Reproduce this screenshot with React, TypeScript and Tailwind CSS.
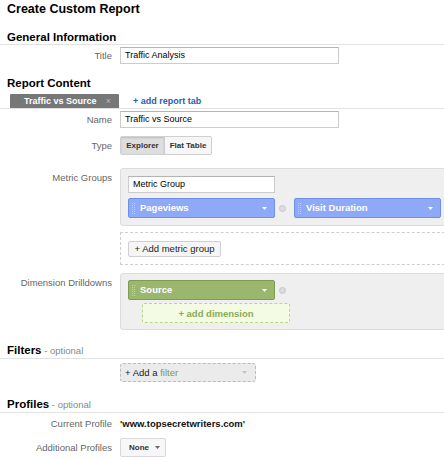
import React from 'react';

function Heading({ title, optional, className = '' }: { title: string; optional?: boolean; className?: string }) {
  return (
    <h2 className={`px-[7px] text-[11.5px] leading-[14px] font-bold text-black border-b border-[#e2e2e2] ${className}`}>
      {title}
      {optional && <span className="font-normal text-[9.5px] text-[#888]"> - optional</span>}
    </h2>
  );
}

function Row({ label, top, children, className = '' }: { label: string; top?: boolean; children: React.ReactNode; className?: string }) {
  return (
    <div className={`flex ${top ? 'items-start' : 'items-center'} ${className}`}>
      <div className={`w-[112px] shrink-0 text-right text-[9.5px] leading-[13px] text-[#666] ${top ? 'pt-[3px]' : ''}`}>{label}</div>
      <div className="ml-[8px] flex-1 min-w-0 leading-[13px]">{children}</div>
    </div>
  );
}

function TextInput({ value, width }: { value: string; width: string }) {
  return (
    <div className={`${width} h-[17px] border border-[#ccc] border-t-[#b4b4b4] bg-white pl-[4px] text-[9px] leading-[15px] text-black whitespace-nowrap`}>
      {value}
    </div>
  );
}

function Handle({ color }: { color: string }) {
  return (
    <svg width="4" height="11" viewBox="0 0 4 11" className="shrink-0">
      {[0, 2, 4, 6, 8, 10].map((y) => (
        <g key={y} fill={color}>
          <rect x="0" y={y} width="1" height="1" />
          <rect x="2" y={y} width="1" height="1" />
        </g>
      ))}
    </svg>
  );
}

function Caret({ color = '#fff' }: { color?: string }) {
  return (
    <svg width="5" height="3" viewBox="0 0 5 3" className="shrink-0">
      <path d="M0 0 H5 L2.5 3 Z" fill={color} />
    </svg>
  );
}

function Remove({ gap }: { gap: string }) {
  return <span className={`ml-[4px] ${gap} block w-[7px] h-[7px] shrink-0 rounded-full border border-[#c8c8c8] bg-[#dcdcdc]`} />;
}

function Pill({ label, tone }: { label: string; tone: 'blue' | 'green' }) {
  const cls =
    tone === 'blue'
      ? 'bg-[#8eaaf7] border-[#6f8fe6]'
      : 'bg-[#9bb66d] border-[#7f9c52]';
  const dot = tone === 'blue' ? '#bccbf5' : '#c3d4a2';
  return (
    <div className={`w-[147px] h-[20px] shrink-0 flex items-center rounded-[2px] border ${cls} pl-[3px] pr-[7px]`}>
      <Handle color={dot} />
      <span className="ml-[4px] flex-1 text-[9.5px] font-bold text-white leading-[12px] whitespace-nowrap">{label}</span>
      <Caret />
    </div>
  );
}

export default function App() {
  return (
    <div className="w-[444px] h-[460px] overflow-hidden bg-white text-black text-[9.5px] leading-[13px] font-['Liberation_Sans',Arial,sans-serif]">
      <h1 className="pl-[7px] text-[12.5px] leading-[18px] font-bold">Create Custom Report</h1>

      <Heading title="General Information" className="mt-[12px]" />
      <Row label="Title" className="mt-[2px]">
        <TextInput value="Traffic Analysis" width="w-[219px]" />
      </Row>

      <Heading title="Report Content" className="mt-[12px] border-b-0" />
      <div className="mt-[4px] flex items-end border-b border-[#e2e2e2]">
        <div className="ml-[10px] w-[109px] h-[14px] bg-[#777] flex items-center pl-[14px] pr-[8px] rounded-t-[1px]">
          <span className="flex-1 text-[9px] leading-[12px] font-bold text-white whitespace-nowrap">Traffic vs Source</span>
          <span className="text-[9px] leading-[10px] text-[#bbb]">×</span>
        </div>
        <span className="ml-[14px] mb-[1px] text-[9px] leading-[12px] font-bold text-[#2a5cb0] whitespace-nowrap">+ add report tab</span>
      </div>

      <Row label="Name" className="mt-[2px]">
        <TextInput value="Traffic vs Source" width="w-[219px]" />
      </Row>

      <Row label="Type" className="mt-[8px]">
        <div className="flex h-[19px] w-[92px] rounded-[2px] border border-[#d0d0d0] bg-[#f6f6f6] text-[8px] font-bold text-[#333] overflow-hidden">
          <span className="w-[44px] flex items-center justify-center bg-[#dedede] shadow-[inset_0_1px_2px_rgba(0,0,0,0.15)] border-r border-[#ccc]">Explorer</span>
          <span className="flex-1 flex items-center justify-center">Flat Table</span>
        </div>
      </Row>

      <Row label="Metric Groups" top className="mt-[13px]">
        <div className="w-[330px] rounded-l-[3px] border border-[#dcdcdc] bg-[#efefef] pl-[7px] pt-[7px] pb-[7px]">
          <TextInput value="Metric Group" width="w-[147px]" />
          <div className="mt-[5px] flex items-center">
            <Pill label="Pageviews" tone="blue" />
            <Remove gap="mr-[8px]" />
            <Pill label="Visit Duration" tone="blue" />
          </div>
        </div>
        <div className="mt-[6px] w-[330px] h-[33px] border border-dashed border-[#cfcfcf] border-r-0 flex items-center pl-[7px]">
          <span className="h-[16px] w-[93px] flex items-center justify-center rounded-[2px] border border-[#cfcfcf] bg-[#f5f5f5] text-[9.5px] text-[#222] whitespace-nowrap">
            + Add metric group
          </span>
        </div>
      </Row>

      <Row label="Dimension Drilldowns" top className="mt-[8px]">
        <div className="w-[330px] h-[57px] rounded-l-[3px] border border-[#dcdcdc] bg-[#efefef] pl-[7px] pt-[6px]">
          <div className="flex items-center">
            <Pill label="Source" tone="green" />
            <Remove gap="" />
          </div>
          <div className="mt-[3px] ml-[14px] w-[148px] h-[20px] rounded-[2px] border border-dashed border-[#bdd58a] bg-[#f4fbe4] flex items-center justify-center text-[9.5px] font-bold text-[#8aab55]">
            + add dimension
          </div>
        </div>
      </Row>

      <Heading title="Filters" optional className="mt-[13px]" />
      <Row label="" className="mt-[4px]">
        <div className="w-[136px] h-[19px] rounded-[3px] border border-dashed border-[#bcbcbc] bg-[#ebebeb] flex items-center pl-[4px] pr-[8px]">
          <span className="flex-1 text-[9.5px] text-[#222]">
            + Add a <span className="text-[#7c9a4a]">filter</span>
          </span>
          <Caret color="#c4c4c4" />
        </div>
      </Row>

      <Heading title="Profiles" optional className="mt-[15px]" />
      <Row label="Current Profile" className="mt-[4px]">
        <div className="text-[9.5px] leading-[13px] font-bold text-[#111] whitespace-nowrap">'www.topsecretwriters.com'</div>
      </Row>
      <Row label="Additional Profiles" className="mt-[8px]">
        <div className="w-[46px] h-[19px] rounded-[2px] border border-[#d8d8d8] bg-[#f7f7f7] flex items-center pl-[8px] gap-[6px] text-[8px] font-bold text-[#333]">
          None
          <Caret color="#666" />
        </div>
      </Row>
    </div>
  );
}
